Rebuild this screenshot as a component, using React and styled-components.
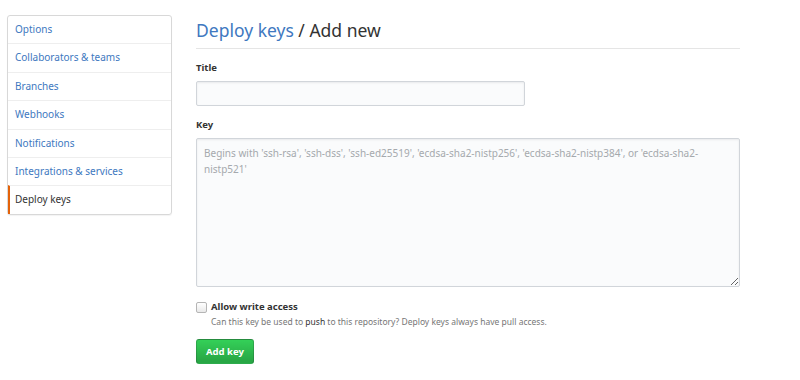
import React from 'react';
import styled, { createGlobalStyle } from 'styled-components';

const GlobalStyle = createGlobalStyle`
  body {
    margin: 0;
    background: #fff;
    font-family: "Noto Sans", "Open Sans", sans-serif;
    color: #333;
  }
`;

const Page = styled.div`
  display: flex;
  align-items: flex-start;
  padding: 15px 0 0 7px;
  gap: 24px;
`;

const Menu = styled.nav`
  width: 163px;
  border: 1px solid #d8d8d8;
  border-radius: 3px;
  box-shadow: 0 1px 1px rgba(0, 0, 0, 0.05);
`;

const MenuItem = styled.a`
  display: block;
  height: 27.4px;
  line-height: 27.4px;
  padding-left: ${(p) => (p.$active ? '5px' : '7px')};
  font-size: 10px;
  color: ${(p) => (p.$active ? '#333' : '#4078c0')};
  border-top: ${(p) => (p.$first ? 'none' : '1px solid #eee')};
  border-left: ${(p) => (p.$active ? '2px solid #e36209' : 'none')};
  text-decoration: none;
`;

const Main = styled.main`
  width: 544px;
`;

const Heading = styled.h2`
  margin: 0;
  padding: 4px 0 7px;
  font-size: 17.5px;
  font-weight: 400;
  color: #333;
  border-bottom: 1px solid #e5e5e5;
  line-height: 22px;
`;

const Crumb = styled.span`
  color: #4078c0;
`;

const Field = styled.div`
  margin-top: ${(p) => p.$top || 0}px;
`;

const Label = styled.label`
  display: block;
  font-size: 9.5px;
  font-weight: 700;
  color: #333;
  margin-bottom: 6px;
  line-height: 14px;
`;

const Input = styled.input`
  box-sizing: border-box;
  width: 329px;
  height: 25px;
  background: #fafbfc;
  border: 1px solid #d1d5da;
  border-radius: 2px;
  box-shadow: inset 0 1px 2px rgba(27, 31, 35, 0.075);
  display: block;
`;

const TextArea = styled.textarea`
  box-sizing: border-box;
  display: block;
  width: 544px;
  height: 149px;
  padding: 6px 7px;
  background: #fafbfc;
  border: 1px solid #d1d5da;
  border-radius: 2px;
  box-shadow: inset 0 1px 2px rgba(27, 31, 35, 0.075);
  font-family: inherit;
  font-size: 10px;
  line-height: 16px;
  resize: vertical;
  &::placeholder {
    color: #a5a9ad;
  }
`;

const CheckRow = styled.div`
  display: flex;
  align-items: center;
  gap: 4px;
  margin-top: 13px;
  line-height: 14px;
`;

const Box = styled.span`
  box-sizing: border-box;
  width: 11px;
  height: 11px;
  border: 1px solid #b5b5b5;
  border-radius: 2px;
  background: linear-gradient(#fff, #e9e9e9);
`;

const CheckLabel = styled.span`
  font-size: 9.5px;
  font-weight: 700;
  color: #333;
`;

const Note = styled.p`
  margin: 1px 0 0 15px;
  font-size: 8.5px;
  line-height: 13px;
  color: #767676;
`;

const Strong = styled.strong`
  font-weight: 400;
  color: #333;
`;

const Button = styled.button`
  display: block;
  margin-top: 11px;
  height: 25px;
  padding: 0 9px;
  font-family: inherit;
  font-size: 9.5px;
  font-weight: 700;
  color: #fff;
  background: linear-gradient(#34d058, #28a745 90%);
  border: 1px solid rgba(27, 31, 35, 0.2);
  border-radius: 3px;
`;

const items = [
  'Options',
  'Collaborators & teams',
  'Branches',
  'Webhooks',
  'Notifications',
  'Integrations & services',
  'Deploy keys',
];

export default function App() {
  return (
    <>
      <GlobalStyle />
      <Page>
        <Menu>
          {items.map((name, i) => (
            <MenuItem key={name} $first={i === 0} $active={name === 'Deploy keys'}>
              {name}
            </MenuItem>
          ))}
        </Menu>
        <Main>
          <Heading>
            <Crumb>Deploy keys</Crumb> / Add new
          </Heading>
          <Field $top={12}>
            <Label>Title</Label>
            <Input />
          </Field>
          <Field $top={12}>
            <Label>Key</Label>
            <TextArea placeholder="Begins with 'ssh-rsa', 'ssh-dss', 'ssh-ed25519', 'ecdsa-sha2-nistp256', 'ecdsa-sha2-nistp384', or 'ecdsa-sha2-nistp521'" />
          </Field>
          <CheckRow>
            <Box />
            <CheckLabel>Allow write access</CheckLabel>
          </CheckRow>
          <Note>
            Can this key be used to <Strong>push</Strong> to this repository? Deploy keys always have pull access.
          </Note>
          <Button>Add key</Button>
        </Main>
      </Page>
    </>
  );
}
